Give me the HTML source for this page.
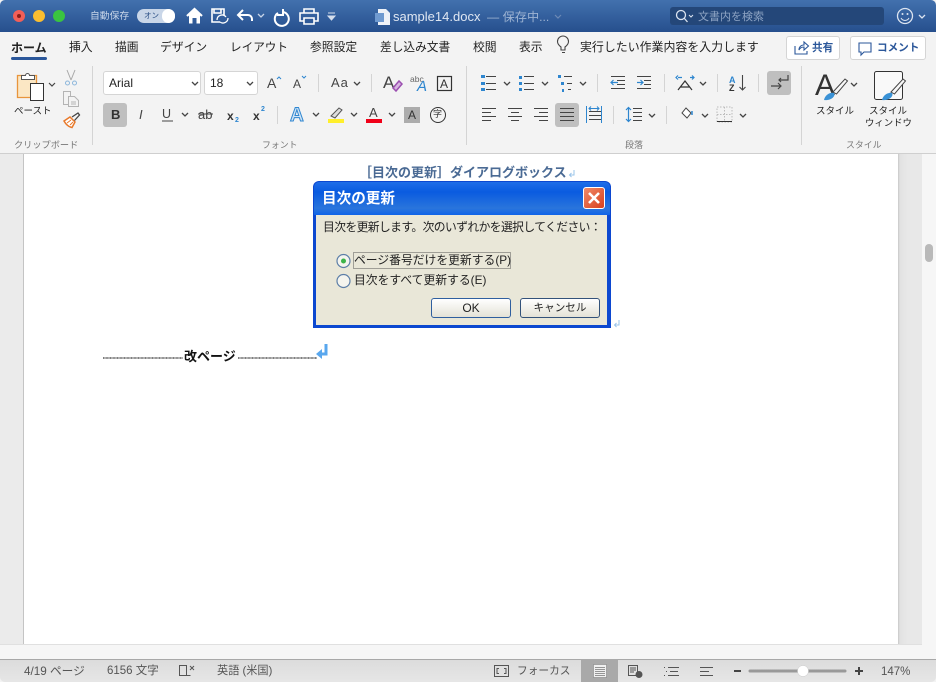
<!DOCTYPE html>
<html><head><meta charset="utf-8"><style>
html,body{margin:0;padding:0;background:#fff}
#w{position:relative;width:936px;height:682px;overflow:hidden;background:#f3f3f3;font-family:"Liberation Sans","Noto Sans CJK JP",sans-serif;color:#333}
.a{position:absolute}
.t{position:absolute;white-space:nowrap;line-height:1}
svg{position:absolute;left:0;top:0}
</style></head><body><div id="w">
<div class="a" style="left:0;top:0;width:936px;height:32px;background:linear-gradient(#4271ae,#264f8d);border-radius:5px 5px 0 0"></div>
<div class="a" style="left:0;top:32px;width:936px;height:121px;background:#f3f3f3"></div>
<div class="a" style="left:0;top:153px;width:936px;height:1px;background:#cfcfcf"></div>
<div class="a" style="left:0;top:154px;width:24px;height:490px;background:#ebebeb"></div>
<div class="a" style="left:23px;top:154px;width:1px;height:490px;background:#c4c4c4"></div>
<div class="a" style="left:24px;top:154px;width:874px;height:490px;background:#fff"></div>
<div class="a" style="left:898px;top:154px;width:24px;height:490px;background:linear-gradient(90deg,#c8c8c8,#e2e2e2 2px,#e8e8e8 40%)"></div>
<div class="a" style="left:922px;top:154px;width:14px;height:505px;background:#f6f6f6"></div>
<div class="a" style="left:925px;top:244px;width:8px;height:18px;border-radius:4px;background:#b9b9b9"></div>
<div class="a" style="left:0;top:644px;width:922px;height:1px;background:#e0e0e0"></div>
<div class="a" style="left:0;top:645px;width:936px;height:14px;background:#f6f6f6"></div>
<div class="a" style="left:0;top:659px;width:936px;height:23px;background:linear-gradient(#dcdcdc,#e6e6e6);border-top:1px solid #a8a8a8;box-sizing:border-box;border-radius:0 0 5px 5px"></div>

<!-- highlighted buttons -->
<div class="a" style="left:103px;top:103px;width:24px;height:24px;background:#bfbfbf;border-radius:3px"></div>
<div class="a" style="left:555px;top:103px;width:24px;height:24px;background:#bfbfbf;border-radius:3px"></div>
<div class="a" style="left:767px;top:71px;width:24px;height:24px;background:#bfbfbf;border-radius:3px"></div>
<div class="a" style="left:581px;top:659px;width:37px;height:23px;background:#a9a9a9"></div>
<!-- font boxes -->
<div class="a" style="left:103px;top:71px;width:98px;height:24px;background:#fff;border:1px solid #d5d5d5;border-radius:3px;box-sizing:border-box"></div>
<div class="a" style="left:204px;top:71px;width:54px;height:24px;background:#fff;border:1px solid #d5d5d5;border-radius:3px;box-sizing:border-box"></div>
<!-- share buttons -->
<div class="a" style="left:786px;top:36px;width:54px;height:24px;background:#fff;border:1px solid #d5d5d5;border-radius:3px;box-sizing:border-box"></div>
<div class="a" style="left:850px;top:36px;width:76px;height:24px;background:#fff;border:1px solid #d5d5d5;border-radius:3px;box-sizing:border-box"></div>
<!-- search -->
<div class="a" style="left:670px;top:7px;width:214px;height:18px;background:#244779;border-radius:3px"></div>
<!-- toggle -->
<div class="a" style="left:137px;top:9px;width:38px;height:14px;background:#c9d6e8;border-radius:7px"></div>
<div class="a" style="left:162px;top:9px;width:13px;height:14px;background:#fff;border-radius:7px"></div>
<!-- tab underline -->
<div class="a" style="left:11px;top:57px;width:36px;height:3px;background:#2b579a;border-radius:2px"></div>
<!-- dividers -->
<div class="a" style="left:92px;top:66px;width:1px;height:79px;background:#d4d4d4"></div>
<div class="a" style="left:466px;top:66px;width:1px;height:79px;background:#d4d4d4"></div>
<div class="a" style="left:801px;top:66px;width:1px;height:79px;background:#d4d4d4"></div>
<div class="a" style="left:318px;top:74px;width:1px;height:18px;background:#d4d4d4"></div>
<div class="a" style="left:371px;top:74px;width:1px;height:18px;background:#d4d4d4"></div>
<div class="a" style="left:277px;top:106px;width:1px;height:18px;background:#d4d4d4"></div>
<div class="a" style="left:597px;top:74px;width:1px;height:18px;background:#d4d4d4"></div>
<div class="a" style="left:664px;top:74px;width:1px;height:18px;background:#d4d4d4"></div>
<div class="a" style="left:717px;top:74px;width:1px;height:18px;background:#d4d4d4"></div>
<div class="a" style="left:758px;top:74px;width:1px;height:18px;background:#d4d4d4"></div>
<div class="a" style="left:613px;top:106px;width:1px;height:18px;background:#d4d4d4"></div>
<div class="a" style="left:666px;top:106px;width:1px;height:18px;background:#d4d4d4"></div>

<!-- title text -->
<span class="t" style="left:90px;top:12px;font-size:9.8px;color:#c7d5e8">自動保存</span>
<span class="t" style="left:144px;top:12px;font-size:7.5px;color:#2b4f85">オン</span>
<span class="t" style="left:393px;top:10px;font-size:13px;color:#dfe7f2">sample14.docx</span>
<span class="t" style="left:487px;top:11px;font-size:12.2px;color:#9db3d2">— 保存中...</span>
<span class="t" style="left:698px;top:12px;font-size:11px;color:#8ea4c4">文書内を検索</span>

<!-- tabs -->
<span class="t" style="left:11px;top:42px;font-size:12px;font-weight:bold;color:#222">ホーム</span>
<span class="t" style="left:69px;top:42px;font-size:11.8px;color:#222">挿入</span>
<span class="t" style="left:115px;top:42px;font-size:11.8px;color:#222">描画</span>
<span class="t" style="left:160px;top:42px;font-size:11.8px;color:#222">デザイン</span>
<span class="t" style="left:230px;top:42px;font-size:11.6px;color:#222">レイアウト</span>
<span class="t" style="left:310px;top:42px;font-size:11.8px;color:#222">参照設定</span>
<span class="t" style="left:380px;top:42px;font-size:11.7px;color:#222">差し込み文書</span>
<span class="t" style="left:473px;top:42px;font-size:11.8px;color:#222">校閲</span>
<span class="t" style="left:519px;top:42px;font-size:11.8px;color:#222">表示</span>
<span class="t" style="left:580px;top:42px;font-size:11.93px;color:#222">実行したい作業内容を入力します</span>
<span class="t" style="left:812px;top:43px;font-size:10.6px;font-weight:bold;color:#2b579a">共有</span>
<span class="t" style="left:877px;top:43px;font-size:10.6px;font-weight:bold;color:#2b579a">コメント</span>

<!-- ribbon text -->
<span class="t" style="left:14px;top:107px;font-size:9.5px;color:#222">ペースト</span>
<span class="t" style="left:14px;top:141px;font-size:9.2px;color:#777">クリップボード</span>
<span class="t" style="left:109px;top:77px;font-size:12px;color:#222">Arial</span>
<span class="t" style="left:210px;top:77px;font-size:12px;color:#222">18</span>
<span class="t" style="left:267px;top:76px;font-size:14px;color:#444">A</span>
<span class="t" style="left:293px;top:78px;font-size:12px;color:#444">A</span>
<span class="t" style="left:331px;top:76px;font-size:13px;color:#444;letter-spacing:1px">Aa</span>
<span class="t" style="left:383px;top:74px;font-size:17px;color:#444">A</span>
<span class="t" style="left:410px;top:75px;font-size:8.5px;color:#666">abc</span>
<span class="t" style="left:417px;top:79px;font-size:15px;font-style:italic;color:#2e86cf">A</span>
<span class="t" style="left:440px;top:78px;font-size:12px;color:#333">A</span>
<span class="t" style="left:111px;top:108px;font-size:13px;font-weight:bold;color:#333">B</span>
<span class="t" style="left:139px;top:108px;font-size:13px;font-style:italic;color:#444">I</span>
<span class="t" style="left:162px;top:108px;font-size:12.5px;color:#444">U</span>
<span class="t" style="left:198px;top:108px;font-size:13px;color:#444">ab</span>
<span class="t" style="left:227px;top:110px;font-size:12px;font-weight:bold;color:#333">x</span>
<span class="t" style="left:235px;top:117px;font-size:7px;font-weight:bold;color:#2e86cf">2</span>
<span class="t" style="left:253px;top:110px;font-size:12px;font-weight:bold;color:#333">x</span>
<span class="t" style="left:261px;top:106px;font-size:7px;font-weight:bold;color:#2e86cf">2</span>
<span class="t" style="left:290px;top:106px;font-size:19px;font-weight:bold;color:#cfe4f6;-webkit-text-stroke:1px #2f86d0">A</span>
<span class="t" style="left:369px;top:106px;font-size:13px;color:#444">A</span>
<div class="a" style="left:404px;top:107px;width:16px;height:16px;background:#acacac"></div>
<span class="t" style="left:408px;top:109px;font-size:12px;color:#333">A</span>
<span class="t" style="left:433px;top:110px;font-size:9px;color:#333">字</span>
<span class="t" style="left:262px;top:141px;font-size:8.9px;color:#777">フォント</span>
<span class="t" style="left:625px;top:141px;font-size:9px;color:#777">段落</span>
<span class="t" style="left:846px;top:141px;font-size:8.9px;color:#777">スタイル</span>
<span class="t" style="left:816px;top:107px;font-size:9.5px;color:#222">スタイル</span>
<span class="t" style="left:869px;top:107px;font-size:9.5px;color:#222">スタイル</span>
<span class="t" style="left:865px;top:118px;font-size:9.4px;color:#222">ウィンドウ</span>
<span class="t" style="left:815px;top:71px;font-size:30px;color:#333">A</span>
<span class="t" style="left:729px;top:76px;font-size:9px;font-weight:bold;color:#2e86cf">A</span>
<span class="t" style="left:729px;top:84px;font-size:9px;font-weight:bold;color:#333">Z</span>

<!-- icons -->
<svg width="936" height="682" viewBox="0 0 936 682" fill="none">
<circle cx="19" cy="16" r="6" fill="#f25f58"/><circle cx="19" cy="16" r="2" fill="#8c1d18"/>
<circle cx="39" cy="16" r="6" fill="#fbbe30"/>
<circle cx="59" cy="16" r="6" fill="#3ac440"/>
<path d="M187 16l7.500-7 7.500 7" stroke="#fff" stroke-width="2.200"/>
<path d="M189 15l5.500-5 5.500 5v8.500h-3.500v-5.500h-4v5.500H189z" fill="#fff"/>
<g stroke="#fff" stroke-width="2">
<path d="M224 15V9h-12v13h8M214 9v4h7V9" stroke-width="1.600"/>
<path d="M217 20a5 5 0 0 1 9-3M228 18a5 5 0 0 1-8 4" stroke-width="1.300"/>
<path d="M243 10l-5 5 5 5M238 15h10a4 4 0 0 1 4 4v2"/>
<path d="M278 12a7 7 0 1 0 5-1M283 8v6h-6" transform="translate(0,1)"/>
<path d="M304 13V9h10v4M304 21h-4v-8h18v8h-4M304 18h10v6h-10z" stroke-width="1.600"/>
</g>
<path d="M258 14l3 3 3-3" stroke="#c8d5e8" stroke-width="1.300"/>
<path d="M328 13h7M328 16l3.500 4 3.500-4z" stroke="#d5deec" fill="#d5deec"/>
<path d="M378 9h8l4 4v12h-12z" fill="#eef2f8"/><rect x="375" y="13" width="9" height="9" fill="#6f9ad0"/>
<path d="M555 15l3 3 3-3" stroke="#6d8ab5" stroke-width="1.200"/>
<circle cx="681" cy="15" r="4.500" stroke="#dce4f0" stroke-width="1.300"/><path d="M684 18l3.500 4" stroke="#dce4f0" stroke-width="1.300"/>
<path d="M689 15l2 2 2-2" stroke="#dce4f0"/>
<circle cx="905" cy="16" r="7.500" stroke="#dce4f0" stroke-width="1.300"/><circle cx="902.500" cy="14" r="1" fill="#dce4f0"/><circle cx="907.500" cy="14" r="1" fill="#dce4f0"/><path d="M901 18a4.500 4.500 0 0 0 8 0" stroke="#dce4f0"/>
<path d="M919 15l3 3 3-3" stroke="#dce4f0" stroke-width="1.300"/>
<!-- bulb, share, comment -->
<path d="M561 50v-3c-2-1.500-3.500-3-3.500-5.500a5.500 5.500 0 0 1 11 0c0 2.500-1.500 4-3.500 5.500v3zM562 52.500h3" stroke="#444" stroke-width="1.100"/>
<path d="M795 46v8h12v-3M799 50c0-3 2-5 5-5v-3l4.500 4-4.500 4v-3c-2 0-4 1-5 3z" stroke="#2b579a" stroke-width="1.100"/>
<path d="M859 43h12v9h-7l-3 3v-3h-2z" stroke="#2b579a" stroke-width="1.100"/>
<!-- clipboard -->
<path d="M17.500 75.500h19v22h-19z" fill="#fbe7c4" stroke="#e8953c" stroke-width="1.300"/>
<path d="M21.500 75.500h4a2 2 0 0 1 4 0h5v4h-13z" fill="#fff" stroke="#555"/>
<rect x="30.500" y="83.500" width="13" height="17" fill="#fff" stroke="#333"/>
<path d="M49 83l3 3 3-3" stroke="#444" stroke-width="1.200"/>
<path d="M67 70l4 10M75 70l-4 10" stroke="#a8a8a8"/><circle cx="67.500" cy="83" r="2" stroke="#8db7dc"/><circle cx="74.500" cy="83" r="2" stroke="#8db7dc"/>
<path d="M63.500 91.500h7v13h-7z" stroke="#b4b4b4" fill="#f3f3f3"/><path d="M68.500 96.500h6l4 4v6h-10z" stroke="#b4b4b4" fill="#f3f3f3"/><path d="M71 102h5M71 104h5" stroke="#b4b4b4"/>
<path d="M64 121l6-4 5 5-3 5.500c-3-.5-6-3-8-6.500z" fill="#fff" stroke="#e8792b" stroke-width="1.500"/><path d="M67 123l4-3M70 125l3-3" stroke="#e8792b"/><path d="M72 117l6-4 1.500 2-5 5.500" fill="#f3f3f3" stroke="#444" stroke-width="1.300"/>
<!-- chevrons -->
<g stroke="#444" stroke-width="1.300">
<path d="M192 82l3 3 3-3M247 82l3 3 3-3M354 82l3 3 3-3M182 113l3 3 3-3M313 113l3 3 3-3M351 113l3 3 3-3M389 113l3 3 3-3"/>
<path d="M504 82l3 3 3-3M542 82l3 3 3-3M580 82l3 3 3-3M700 82l3 3 3-3M649 114l3 3 3-3M702 114l3 3 3-3M740 114l3 3 3-3M851 83l3 3 3-3"/>
</g>
<path d="M277 79l2-2 2 2M302 76l2 2 2-2" stroke="#2e86cf"/>
<path d="M162 121h11M198 114h15" stroke="#444"/>
<path d="M393 88l6-7 3 3-6 7z" stroke="#9b4fb0" stroke-width="1.500" fill="#d8b4e2"/>
<rect x="437.500" y="76.500" width="14" height="14" stroke="#333" stroke-width="1.200"/>
<!-- text effects etc -->
<path d="M331 116l8-8 3 2-7 8z" stroke="#555" fill="#ddd"/>
<rect x="328" y="119" width="16" height="4" fill="#ffef2b"/>
<rect x="366" y="119" width="16" height="4" fill="#f00018"/>
<circle cx="438" cy="115" r="7.500" stroke="#333"/>
<!-- bullets -->
<g fill="#2e86cf"><rect x="481" y="75" width="4" height="3"/><rect x="481" y="82" width="4" height="3"/><rect x="481" y="88" width="4" height="3"/>
<rect x="519" y="76" width="3" height="3"/><rect x="519" y="82" width="3" height="3"/><rect x="519" y="88" width="3" height="3"/>
<rect x="558" y="75" width="3" height="3"/><rect x="561" y="82" width="3" height="3"/><rect x="562" y="89" width="2" height="3"/></g>
<g stroke="#444" stroke-width="1.100">
<path d="M486 76.500h10M486 83.500h10M486 89.500h10M524 76.500h10M524 83.500h10M524 89.500h10M564 76.500h8M567 83.500h5M568 89.500h3"/>
<path d="M611 76.500h14M617 80.500h8M617 84.500h8M611 88.500h14M637 76.500h14M644 80.500h7M644 84.500h7M637 88.500h14"/>
<path d="M482 108.500h14M482 112.500h9M482 116.500h14M482 120.500h9M508 108.500h14M511 112.500h8M508 116.500h14M511 120.500h8M534 108.500h14M539 112.500h9M534 116.500h14M539 120.500h9"/>
<path d="M560 108.500h14M560 112.500h14M560 116.500h14M560 120.500h14"/>
<path d="M589 111.500h12M589 115.500h12M589 119.500h12"/>
<path d="M633 108.500h9M633 112.500h9M633 116.500h9M633 120.500h9"/>
</g>
<g stroke="#2e86cf" stroke-width="1.200">
<path d="M611 82.500h7M613.500 80l-2.500 2.500 2.500 2.500M637 82.500h6M640.500 80l2.500 2.500-2.500 2.500"/>
<path d="M586.500 106v17M601.500 106v17M589 108.500h10M591 106.500l-2 2 2 2M597 106.500l2 2-2 2" stroke-width="1"/>
<path d="M628.500 108v13M626 110l2.500-2.500 2.500 2.500M626 119l2.500 2.500 2.500-2.500"/>
<path d="M678 77.500h4M678 75.500l-2 2 2 2M690 77.500h4M692 75.500l2 2-2 2"/>
</g>
<path d="M678 90l7-9 7 9M680.500 87h9" stroke="#333" stroke-width="1.200"/>
<path d="M742.500 75v15M739.500 87l3 3 3-3" stroke="#444" stroke-width="1.100"/>
<path d="M771 86h10M778 83l3 3-3 3M788 75v5h-9M781 78l-2 2 2 2" stroke="#444" stroke-width="1.200"/>
<path d="M686 108l5 5-4 5-5-5z" fill="#fff" stroke="#444"/><path d="M692 111v4" stroke="#2e86cf" stroke-width="1.500"/>
<path d="M717 107h15v15h-15zM724.500 107v15M717 114.500h15" stroke="#bbb" stroke-dasharray="1.500 1.500"/><path d="M717 121.500h15" stroke="#333"/>
<!-- style brushes -->
<path d="M833 92l12-13 2.500 2-11 13z" fill="#f8f8f8" stroke="#444"/><path d="M824 100c1-5 6-8 10-7 2 3-3 8-10 7z" fill="#3a92d6"/>
<rect x="874.500" y="71.500" width="28" height="28" rx="2" stroke="#333" fill="#f9f9f9"/>
<path d="M891 92l12-13 2.500 2-11 13z" fill="#f8f8f8" stroke="#444"/><path d="M882 100c1-5 6-8 10-7 2 3-3 8-10 7z" fill="#3a92d6"/>
<!-- status icons -->
<path d="M179.500 665.500h7v10h-7zM186.500 665.500v10" stroke="#555"/><path d="M190 666l4 4M194 666l-4 4M186.500 675.500h4" stroke="#555"/>
<path d="M494.500 665.500h14v11h-14z" stroke="#555"/><path d="M499 668.500h-2v5h2M504 668.500h2v5h-2" stroke="#555"/>
<rect x="593.500" y="664.500" width="13" height="13" fill="#f0f0f0" stroke="#888" stroke-width=".6"/>
<path d="M595 667.500h10M595 669.500h10M595 671.500h10M595 673.500h10M595 675.500h10" stroke="#777" stroke-width=".8"/>
<path d="M628.500 665.500h9v10h-9zM630 668h6M630 670h6M630 672h4" stroke="#555"/><circle cx="639" cy="674.500" r="3.500" fill="#555"/>
<path d="M664 667.500h1M668 667.500h11M666 671.500h1M670 671.500h8M664 675.500h1M668 675.500h11" stroke="#555"/>
<path d="M700 667.500h13M700 671.500h9M700 675.500h13" stroke="#555"/>
<path d="M734 671h7" stroke="#444" stroke-width="2"/>
<path d="M750 671h95" stroke="#999" stroke-width="3" stroke-linecap="round"/>
<circle cx="803" cy="671" r="5.500" fill="#fff" stroke="#ccc" stroke-width=".5"/>
<path d="M855 671h8M859 667v8" stroke="#444" stroke-width="2"/>
<!-- page break lines -->
<path d="M103 358h80M238 358h79" stroke="#555" stroke-width="1.600" stroke-dasharray="1 .4"/>
<path d="M326 344v10h-6" stroke="#59a7ee" stroke-width="3"/><path d="M322 349l-6 5 6 5z" fill="#59a7ee"/>
<path d="M574 170v5h-4M571.500 173l-2 2 2 2" stroke="#9ac4ea"/>
<path d="M619 320v5h-4M616.500 323l-2 2 2 2" stroke="#9ac4ea"/>
</svg>

<!-- doc text -->
<span class="t" style="left:359px;top:166px;font-size:13px;font-weight:bold;color:#4a6a94">［目次の更新］ダイアログボックス</span>
<span class="t" style="left:184px;top:350px;font-size:13px;font-weight:bold;color:#111">改ページ</span>

<!-- XP dialog -->
<div class="a" style="left:313px;top:181px;width:298px;height:147px;background:#0c48d0;border-radius:6px 6px 0 0"></div>
<div class="a" style="left:314px;top:182px;width:296px;height:33px;background:linear-gradient(#1f6ee8,#0a5be0 30%,#2a75dc 80%,#0e63e8);border-radius:5px 5px 0 0"></div>
<div class="a" style="left:316px;top:215px;width:291px;height:110px;background:#e9e7d8"></div>
<span class="t" style="left:322px;top:192px;font-size:14.6px;font-weight:bold;color:#fff">目次の更新</span>
<div class="a" style="left:583px;top:187px;width:22px;height:22px;background:linear-gradient(135deg,#f08a6a,#d8401c);border:1px solid #fff;box-sizing:border-box;border-radius:3px"></div>
<svg width="936" height="682" viewBox="0 0 936 682" fill="none">
<path d="M589 193l10 10M599 193l-10 10" stroke="#fff" stroke-width="2.600"/>
<circle cx="343.500" cy="261" r="6.500" fill="#f4f4ee" stroke="#5d7fa8" stroke-width="1.200"/>
<circle cx="343.500" cy="261" r="2.500" fill="#3cb44a"/>
<circle cx="343.500" cy="281" r="6.500" fill="#f4f4ee" stroke="#5d7fa8" stroke-width="1.200"/>
<rect x="353.500" y="252.500" width="157" height="16" stroke="#555" stroke-dasharray="1 1"/>
</svg>
<span class="t" style="left:323px;top:222px;font-size:11.8px;letter-spacing:-.6px;color:#222">目次を更新します。次のいずれかを選択してください：</span>
<span class="t" style="left:354px;top:255px;font-size:11.8px;color:#222">ページ番号だけを更新する(P)</span>
<span class="t" style="left:354px;top:275px;font-size:11.8px;color:#222">目次をすべて更新する(E)</span>
<div class="a" style="left:431px;top:298px;width:80px;height:20px;background:linear-gradient(#fff,#e4e2d6);border:1.500px solid #2f5f9f;box-sizing:border-box;border-radius:3px;font-size:12px;line-height:18px;text-align:center;color:#222">OK</div>
<div class="a" style="left:520px;top:298px;width:80px;height:20px;background:linear-gradient(#fff,#e4e2d6);border:1.500px solid #33527a;box-sizing:border-box;border-radius:3px;font-size:10.6px;line-height:18px;text-align:center;color:#222">キャンセル</div>

<!-- status text -->
<span class="t" style="left:24px;top:666px;font-size:11.7px;color:#555">4/19 ページ</span>
<span class="t" style="left:107px;top:666px;font-size:11.5px;color:#555">6156 文字</span>
<span class="t" style="left:217px;top:666px;font-size:11.2px;color:#555">英語 (米国)</span>
<span class="t" style="left:517px;top:666px;font-size:10.7px;color:#555">フォーカス</span>
<span class="t" style="left:881px;top:667px;font-size:11.5px;color:#555">147%</span>
</div></body></html>
